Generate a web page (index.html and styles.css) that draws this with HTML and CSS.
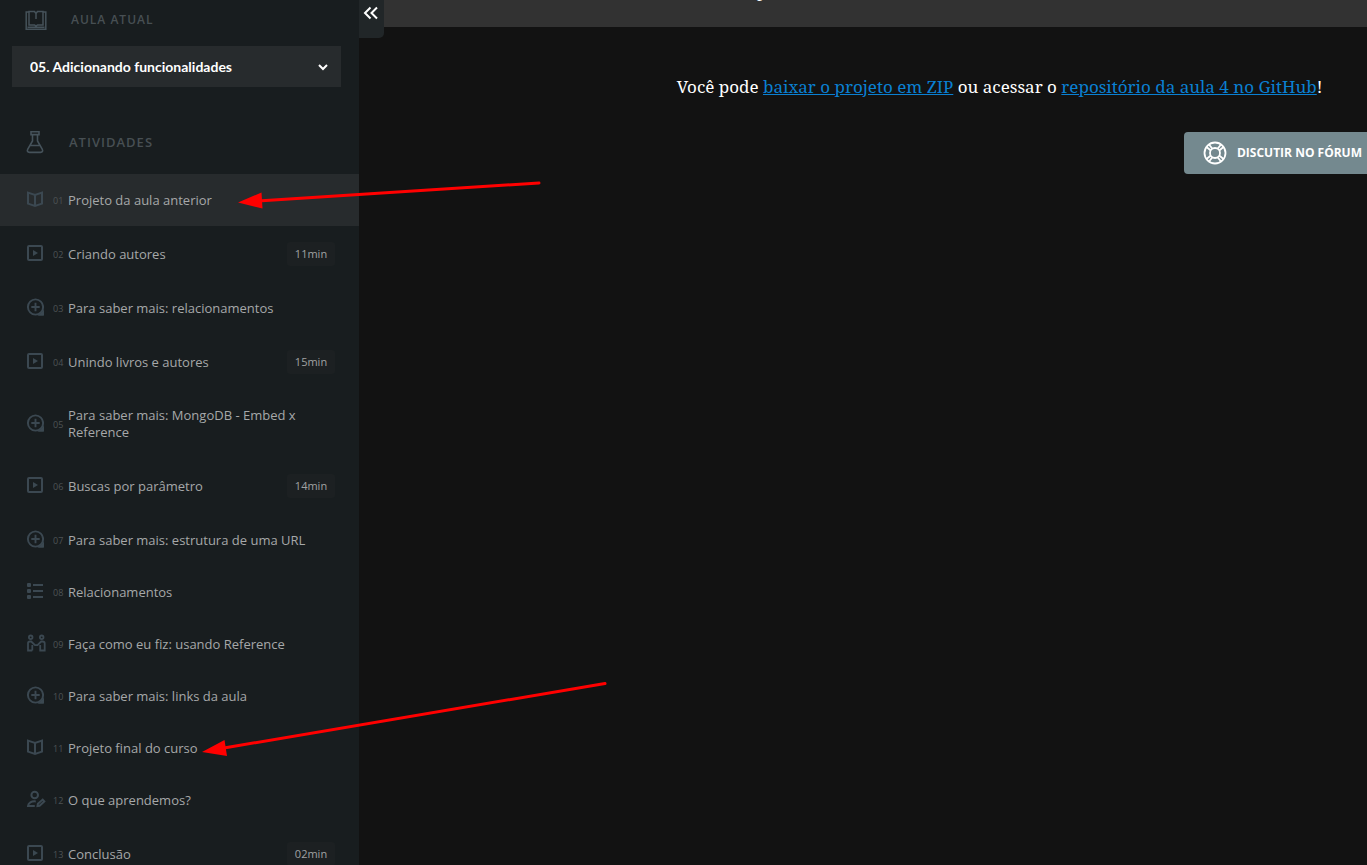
FILE: index.html
```html
<!DOCTYPE html>
<html lang="pt-BR">
<head>
<meta charset="utf-8">
<title>Projeto da aula anterior</title>
<link rel="stylesheet" href="styles.css">
</head>
<body>
<svg class="sprite" aria-hidden="true">
  <symbol id="book" viewBox="0 0 18 18"><path d="M2 2.600 9 5l7-2.400v11L9 16l-7-2.400zM9 5v11" fill="none" stroke="currentColor" stroke-width="2"/></symbol>
  <symbol id="video" viewBox="0 0 18 18"><rect x="2" y="2" width="14" height="14" rx="1" fill="none" stroke="currentColor" stroke-width="2"/><path d="M7 6v6l5-3z" fill="currentColor"/></symbol>
  <symbol id="plus" viewBox="0 0 18 18"><circle cx="9.500" cy="9" r="7.600" fill="none" stroke="currentColor" stroke-width="1.900"/><path d="M9.500 4.800v8.400M5.300 9h8.400" stroke="currentColor" stroke-width="1.900"/><path d="M18 9v8.600H9.500c5 0 8.500-4 8.500-8.600z" fill="currentColor"/><path d="M17.500 12.500v5H12z" fill="currentColor"/></symbol>
  <symbol id="list" viewBox="0 0 18 18"><g fill="currentColor"><rect x="1" y="1" width="4" height="4" rx="1"/><rect x="1" y="7" width="4" height="4" rx="1"/><rect x="1" y="13" width="4" height="4" rx="1"/><path d="M7 2h10v2H7zM7 8h10v2H7zM7 14h10v2H7z"/></g></symbol>
  <symbol id="people" viewBox="0 0 20 18"><g fill="none" stroke="currentColor" stroke-width="1.8"><circle cx="4.700" cy="3.300" r="1.800"/><circle cx="15.700" cy="3.300" r="1.800"/><path d="M6.300 16.500H2V9.300q0-1.800 2-1.800h1.200L9 11.200h2.500l3.700-3.700h1.300q2.200 0 2.200 1.800v7.200h-4.500V11M6.300 16.500V11"/></g></symbol>
  <symbol id="edit" viewBox="0 0 20 18"><g fill="none" stroke="currentColor" stroke-width="2"><circle cx="8.700" cy="5" r="3.300"/><path d="M9.800 11.400C5.500 11 2.200 12.600 2 16h6.800M11.500 16.100l.4-2.300 4.800-4.200 1.600 1.800-4.700 4.300z"/></g></symbol>
</svg>
<div class="page">
  <aside class="sidebar">
    <div class="heading">
      <svg class="heading-icon" viewBox="0 0 24 24" fill="none" stroke="currentColor" stroke-width="1.5"><path d="M5 5H2.200v17.200h19.600V5H19"/><path d="M12 6.500 10.500 4.500H5V18h5.500l1.500 1.200 1.500-1.200H19V4.500h-5.500zV12M3.500 20.200h17"/></svg>
      <label for="lesson">AULA ATUAL</label>
    </div>
    <div class="picker">
      <select id="lesson"><option>05. Adicionando funcionalidades</option></select>
      <svg class="chevron" viewBox="0 0 12 8"><path d="m2 2 4 4 4-4" fill="none" stroke="currentColor" stroke-width="2"/></svg>
    </div>
    <div class="heading activities">
      <svg class="heading-icon" viewBox="0 0 24 24" fill="none" stroke="currentColor" stroke-width="1.6"><path d="M8 1.800h8v2.800h-1.500V11l4.700 8.200c1 1.800.300 3.200-1.700 3.200h-11c-2 0-2.700-1.400-1.700-3.200L9.500 11V4.600H8zM7.500 15.500h9M9.500 4.600h5"/></svg>
      <h2>ATIVIDADES</h2>
    </div>
    <nav>
      <a class="item active" href="#1"><svg><use href="#book"/></svg><span class="num">01</span><span class="name">Projeto da aula anterior</span></a>
      <a class="item timed" href="#2"><svg><use href="#video"/></svg><span class="num">02</span><span class="name">Criando autores</span><span class="time">11min</span></a>
      <a class="item" href="#3"><svg><use href="#plus"/></svg><span class="num">03</span><span class="name">Para saber mais: relacionamentos</span></a>
      <a class="item timed" href="#4"><svg><use href="#video"/></svg><span class="num">04</span><span class="name">Unindo livros e autores</span><span class="time">15min</span></a>
      <a class="item" href="#5"><svg><use href="#plus"/></svg><span class="num">05</span><span class="name">Para saber mais: MongoDB - Embed x Reference</span></a>
      <a class="item timed" href="#6"><svg><use href="#video"/></svg><span class="num">06</span><span class="name">Buscas por parâmetro</span><span class="time">14min</span></a>
      <a class="item" href="#7"><svg><use href="#plus"/></svg><span class="num">07</span><span class="name">Para saber mais: estrutura de uma URL</span></a>
      <a class="item" href="#8"><svg><use href="#list"/></svg><span class="num">08</span><span class="name">Relacionamentos</span></a>
      <a class="item" href="#9"><svg class="wide"><use href="#people"/></svg><span class="num">09</span><span class="name">Faça como eu fiz: usando Reference</span></a>
      <a class="item" href="#10"><svg><use href="#plus"/></svg><span class="num">10</span><span class="name">Para saber mais: links da aula</span></a>
      <a class="item" href="#11"><svg><use href="#book"/></svg><span class="num">11</span><span class="name">Projeto final do curso</span></a>
      <a class="item" href="#12"><svg class="wide"><use href="#edit"/></svg><span class="num">12</span><span class="name">O que aprendemos?</span></a>
      <a class="item timed" href="#13"><svg><use href="#video"/></svg><span class="num">13</span><span class="name">Conclusão</span><span class="time">02min</span></a>
    </nav>
  </aside>
  <main class="content">
    <header class="topbar"><span class="topbar-title">p</span></header>
    <button class="toggle" aria-label="Recolher menu"><svg viewBox="0 0 16 14"><path d="M7.500 1.500 2 7l5.500 5.500M14 1.500 8.500 7l5.500 5.500" fill="none" stroke="currentColor" stroke-width="2"/></svg></button>
    <p class="text">Você pode <a href="#zip">baixar o projeto em ZIP</a> ou acessar o <a href="#repo">repositório da aula 4 no GitHub</a>!</p>
    <button class="forum">
      <svg viewBox="0 0 24 24" fill="none" stroke="currentColor" stroke-width="1.8"><circle cx="12" cy="12" r="10.500"/><circle cx="12" cy="12" r="5"/><path d="m3.500 6 4 3.200M6 3.500l3.200 4M20.500 6l-4 3.200M18 3.500l-3.200 4M3.500 18l4-3.200M6 20.500l3.200-4M20.500 18l-4-3.200M18 20.500l-3.200-4"/></svg>
      DISCUTIR NO FÓRUM
    </button>
  </main>
  <svg class="arrows" width="620" height="770" viewBox="0 0 620 770" aria-hidden="true"><g stroke="#f00" stroke-width="3" stroke-linecap="round"><path d="M539 183 258 201M605 683.500 224 748"/></g><path d="M238 202.500 261.500 192.500 262.500 208.500zM202 752 224.500 740 227 756z" fill="#f00"/></svg>
</div>
</body>
</html>
```
FILE: styles.css
```css
* { box-sizing: border-box; }
body { margin: 0; background: #121212; font-family: "Open Sans", "Noto Sans", sans-serif; }
.sprite { display: none; }
.page { position: relative; display: flex; height: 100vh; overflow: hidden; }
.sidebar { flex: 0 0 359px; background: #181d1f; padding-top: 7px; }
.heading { display: flex; align-items: center; gap: 23px; height: 24px; padding-left: 24px; color: #474f53; font-size: 12px; font-weight: 600; letter-spacing: 1px; }
.heading-icon { width: 24px; height: 24px; flex: none; color: #45525a; }
.heading h2 { margin: 0; font-size: 13px; font-weight: 600; }
.heading.activities { gap: 22px; margin: 43px 0 20px; padding-left: 23px; }
.picker { position: relative; margin: 15px 18px 0 12px; }
.picker select { display: block; width: 100%; height: 41px; padding: 0 18px; border: 0; border-radius: 0; appearance: none; background: #272b2d; color: #fff; font: bold 14px Lato, sans-serif; }
.chevron { position: absolute; right: 12px; top: 17px; width: 12px; height: 8px; color: #fff; pointer-events: none; }
.item { display: flex; align-items: center; min-height: 52px; padding: 15px 24px 15px 26px; color: #a6a8a9; font-size: 13px; line-height: 17px; text-decoration: none; }
.item.active { background: #272b2d; }
.item.timed { min-height: 56px; }
.item svg { flex: none; width: 18px; height: 18px; margin: 0 9px 3px 0; color: #3b4851; }
.item svg.wide { width: 20px; margin-right: 7px; }
.num { flex: none; width: 15px; color: #4e5355; font-size: 9px; }
.name { flex: 1; padding: 2px 0; }
.time { flex: none; width: 48px; border-radius: 3px; background: #1c2022; color: #a0a2a3; font-size: 11px; line-height: 24px; text-align: center; }
.content { position: relative; flex: 1; display: flex; flex-direction: column; min-width: 0; }
.topbar { height: 27px; padding-left: 398px; overflow: hidden; background: #323232; color: #fff; }
.topbar-title { display: block; margin-top: -23px; font: 20px/24px "Liberation Serif", serif; }
.toggle { position: absolute; left: 0; top: 0; width: 25px; height: 38px; padding: 0 2px 12px 0; border: 0; border-radius: 0 0 5px 0; background: #212628; color: #fff; }
.toggle svg { display: block; width: 16px; height: 14px; margin: 0 auto; }
.text { margin: 46px 0 31px; padding-left: 273px; color: #fff; font: 17px/28px "Source Serif Pro", "Noto Serif", "Liberation Serif", serif; text-align: center; white-space: nowrap; }
.text a { color: #0a80d2; }
.forum { display: flex; align-items: center; align-self: flex-end; gap: 10px; height: 42px; padding: 0 5px 2px 19px; border: 0; border-radius: 4px 0 0 4px; background: #74898f; color: #fff; font: bold 12px "Open Sans", sans-serif; }
.forum svg { width: 24px; height: 24px; margin-top: 2px; }
.arrows { position: absolute; left: 0; top: 0; pointer-events: none; }
```
